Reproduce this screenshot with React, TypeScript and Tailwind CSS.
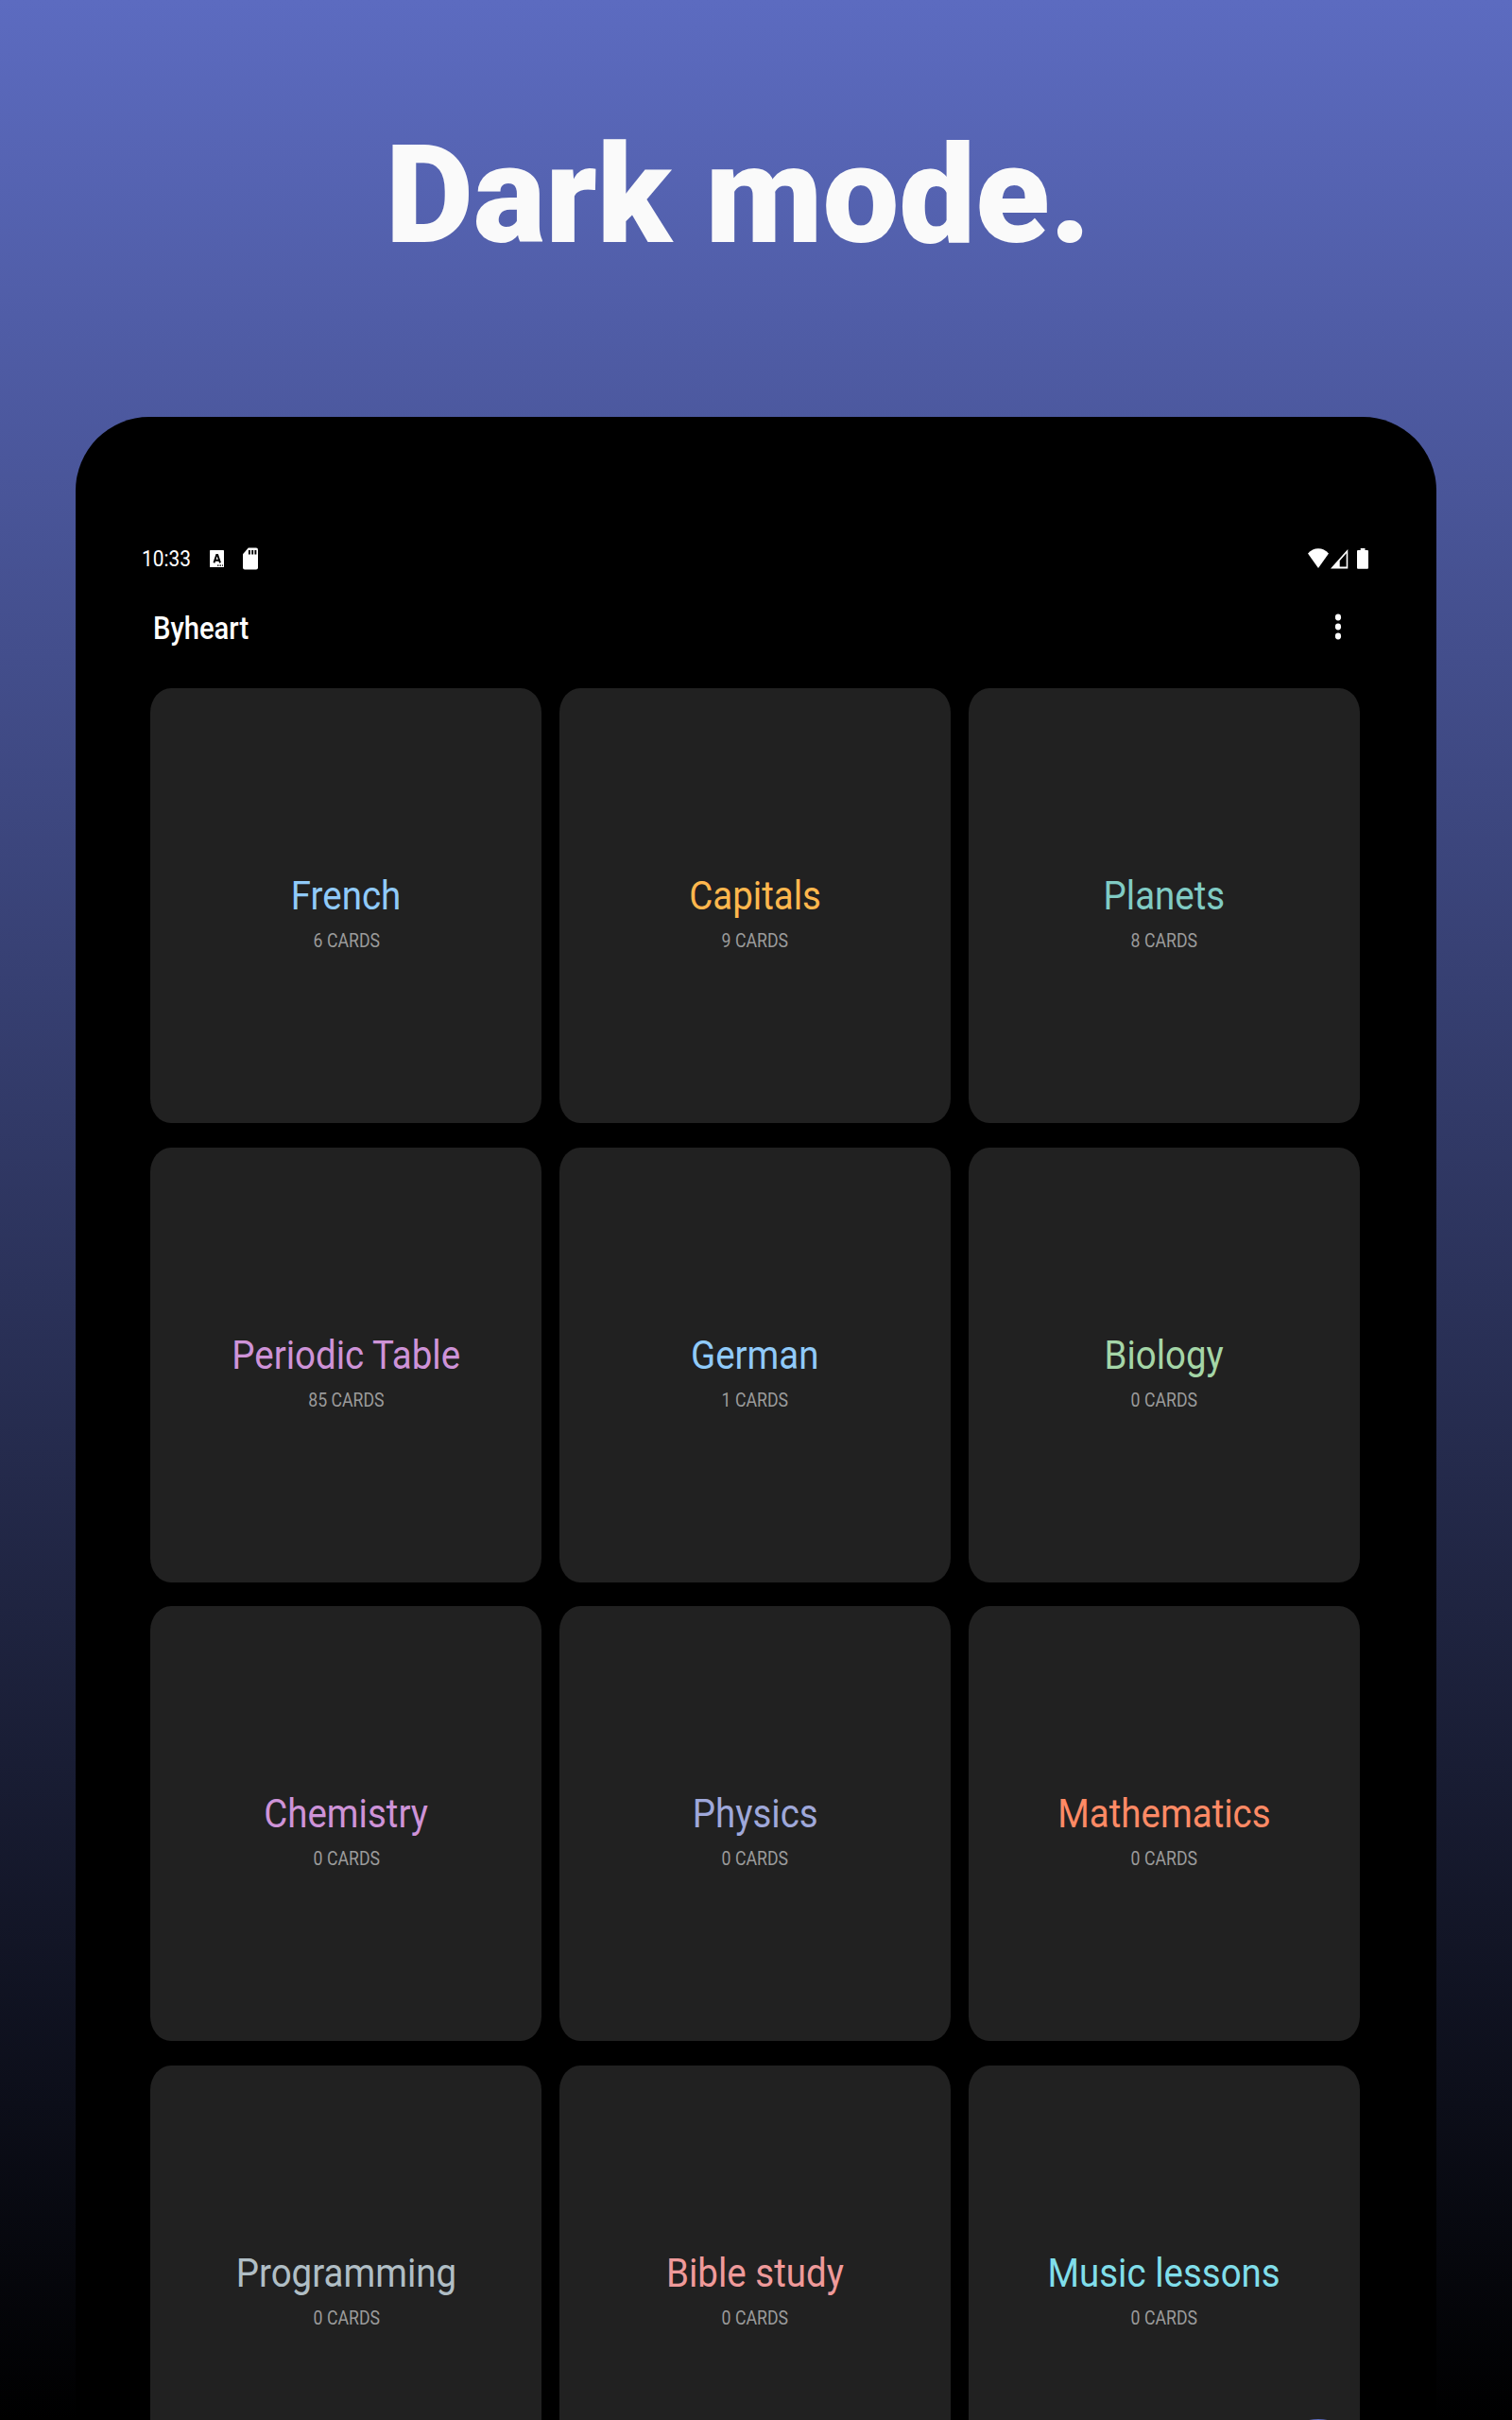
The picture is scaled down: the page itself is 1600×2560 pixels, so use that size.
type Deck = { name: string; cards: number; color: string };

const decks: Deck[] = [
  { name: 'French', cards: 6, color: 'text-[#90caf9]' },
  { name: 'Capitals', cards: 9, color: 'text-[#ffb74d]' },
  { name: 'Planets', cards: 8, color: 'text-[#80cbc4]' },
  { name: 'Periodic Table', cards: 85, color: 'text-[#ce93d8]' },
  { name: 'German', cards: 1, color: 'text-[#90caf9]' },
  { name: 'Biology', cards: 0, color: 'text-[#a5d6a7]' },
  { name: 'Chemistry', cards: 0, color: 'text-[#ce93d8]' },
  { name: 'Physics', cards: 0, color: 'text-[#9fa8da]' },
  { name: 'Mathematics', cards: 0, color: 'text-[#ff8a65]' },
  { name: 'Programming', cards: 0, color: 'text-[#b0bec5]' },
  { name: 'Bible study', cards: 0, color: 'text-[#ef9a9a]' },
  { name: 'Music lessons', cards: 0, color: 'text-[#80deea]' },
];

function StatusBar() {
  return (
    <div className="flex h-[24px] items-start justify-between pl-[70px] pr-[72px]">
      <div className="flex items-start">
        <span className="w-[72px] origin-left scale-x-[0.885] whitespace-nowrap text-[23.6px] leading-[25px]">10:33</span>
        <svg className="mt-[3px] h-[18px] w-[15px]" viewBox="0 0 15 18">
          <rect width="15" height="18" rx="0.6" fill="#fff" />
          <path d="M4.400 13.400 7.200 5h1l2.800 8.400M5.300 10.800h4.600" fill="none" stroke="#000" strokeWidth="1.9" />
          <path d="M8 16.200h1.500M10.500 16.200H12M13 16.200h1" stroke="#000" strokeWidth="1.2" />
        </svg>
        <svg className="ml-[20px] h-[24px] w-[16px]" viewBox="0 0 16 24">
          <path d="M5.800 .5H14a2 2 0 0 1 2 2V21.500a2 2 0 0 1-2 2H2a2 2 0 0 1-2-2V7.200Z" fill="#fff" />
          <path d="M6.900 3v4.600M10.200 3v4.600M13.400 3v4.600" stroke="#000" strokeWidth="1.9" />
        </svg>
      </div>
      <div className="flex items-start">
        <svg className="mt-px h-[21px] w-[22px]" viewBox="0 0 22 21">
          <path d="M0 5.400C6-1.600 16-1.600 22 5.400L11 21Z" fill="#fff" />
        </svg>
        <svg className="ml-[2px] mt-[2px] h-[21px] w-[18.500px]" viewBox="0 0 18.500 21">
          <path fillRule="evenodd" d="M18.300 0V20.600H0ZM16.700 4.300 9.700 12.200V18.500H16.700Z" fill="#fff" />
        </svg>
        <svg className="ml-[9.500px] mt-px h-[22px] w-[12px]" viewBox="0 0 12 22">
          <path d="M3.700 0H8.500V2H11a1 1 0 0 1 1 1V20.700a1 1 0 0 1-1 1H1a1 1 0 0 1-1-1V3a1 1 0 0 1 1-1H3.700Z" fill="#fff" />
        </svg>
      </div>
    </div>
  );
}

function DeckCard({ deck }: { deck: Deck }) {
  return (
    <div className="flex flex-col items-center rounded-[22px/26px] bg-[#212121] pt-[194px]">
      <h2 className={`scale-x-[0.895] whitespace-nowrap text-[43px] leading-[50px] ${deck.color}`}>{deck.name}</h2>
      <p className="mt-[11px] scale-x-[0.885] whitespace-nowrap text-[20px] leading-[24px] text-[#9b9b9b]">{deck.cards} CARDS</p>
    </div>
  );
}

export default function App() {
  return (
    <div className="relative flex h-[2560px] w-[1600px] flex-col overflow-hidden bg-linear-to-b/srgb from-[#5c6bc0] to-black font-[Roboto,sans-serif] text-white">
      <h1 className="flex h-[441px] shrink-0 items-start justify-center pr-[37px] pt-[121px]">
        <span className="scale-x-[0.993] whitespace-nowrap text-[145px] font-black leading-[170px] text-[#fafafa]">Dark mode.</span>
      </h1>
      <main className="mx-[80px] h-[2119px] overflow-hidden rounded-t-[78px] bg-black pt-[138px]">
        <StatusBar />
        <header className="mt-[38px] flex h-[48px] items-center justify-between pl-[81.500px] pr-[100px]">
          <div className="origin-left scale-x-[0.885] text-[33px] font-medium leading-[40px]">Byheart</div>
          <svg className="mb-[4px] h-[28px] w-[8px]" viewBox="0 0 8 28" fill="#fff">
            <ellipse cx="4" cy="4" rx="3.100" ry="3.400" />
            <ellipse cx="4" cy="14" rx="3.100" ry="3.400" />
            <ellipse cx="4" cy="24" rx="3.100" ry="3.400" />
          </svg>
        </header>
        <section className="ml-[79.300px] mt-[39px] grid w-[1279.600px] auto-rows-[460px] grid-cols-3 gap-x-[18.500px] gap-y-[25.700px]">
          {decks.map((deck) => (
            <DeckCard key={deck.name} deck={deck} />
          ))}
        </section>
      </main>
      <button aria-label="Add deck" className="absolute left-[1347px] top-[2559px] h-[110px] w-[96px] rounded-full bg-[#5c6bc0]" />
    </div>
  );
}
